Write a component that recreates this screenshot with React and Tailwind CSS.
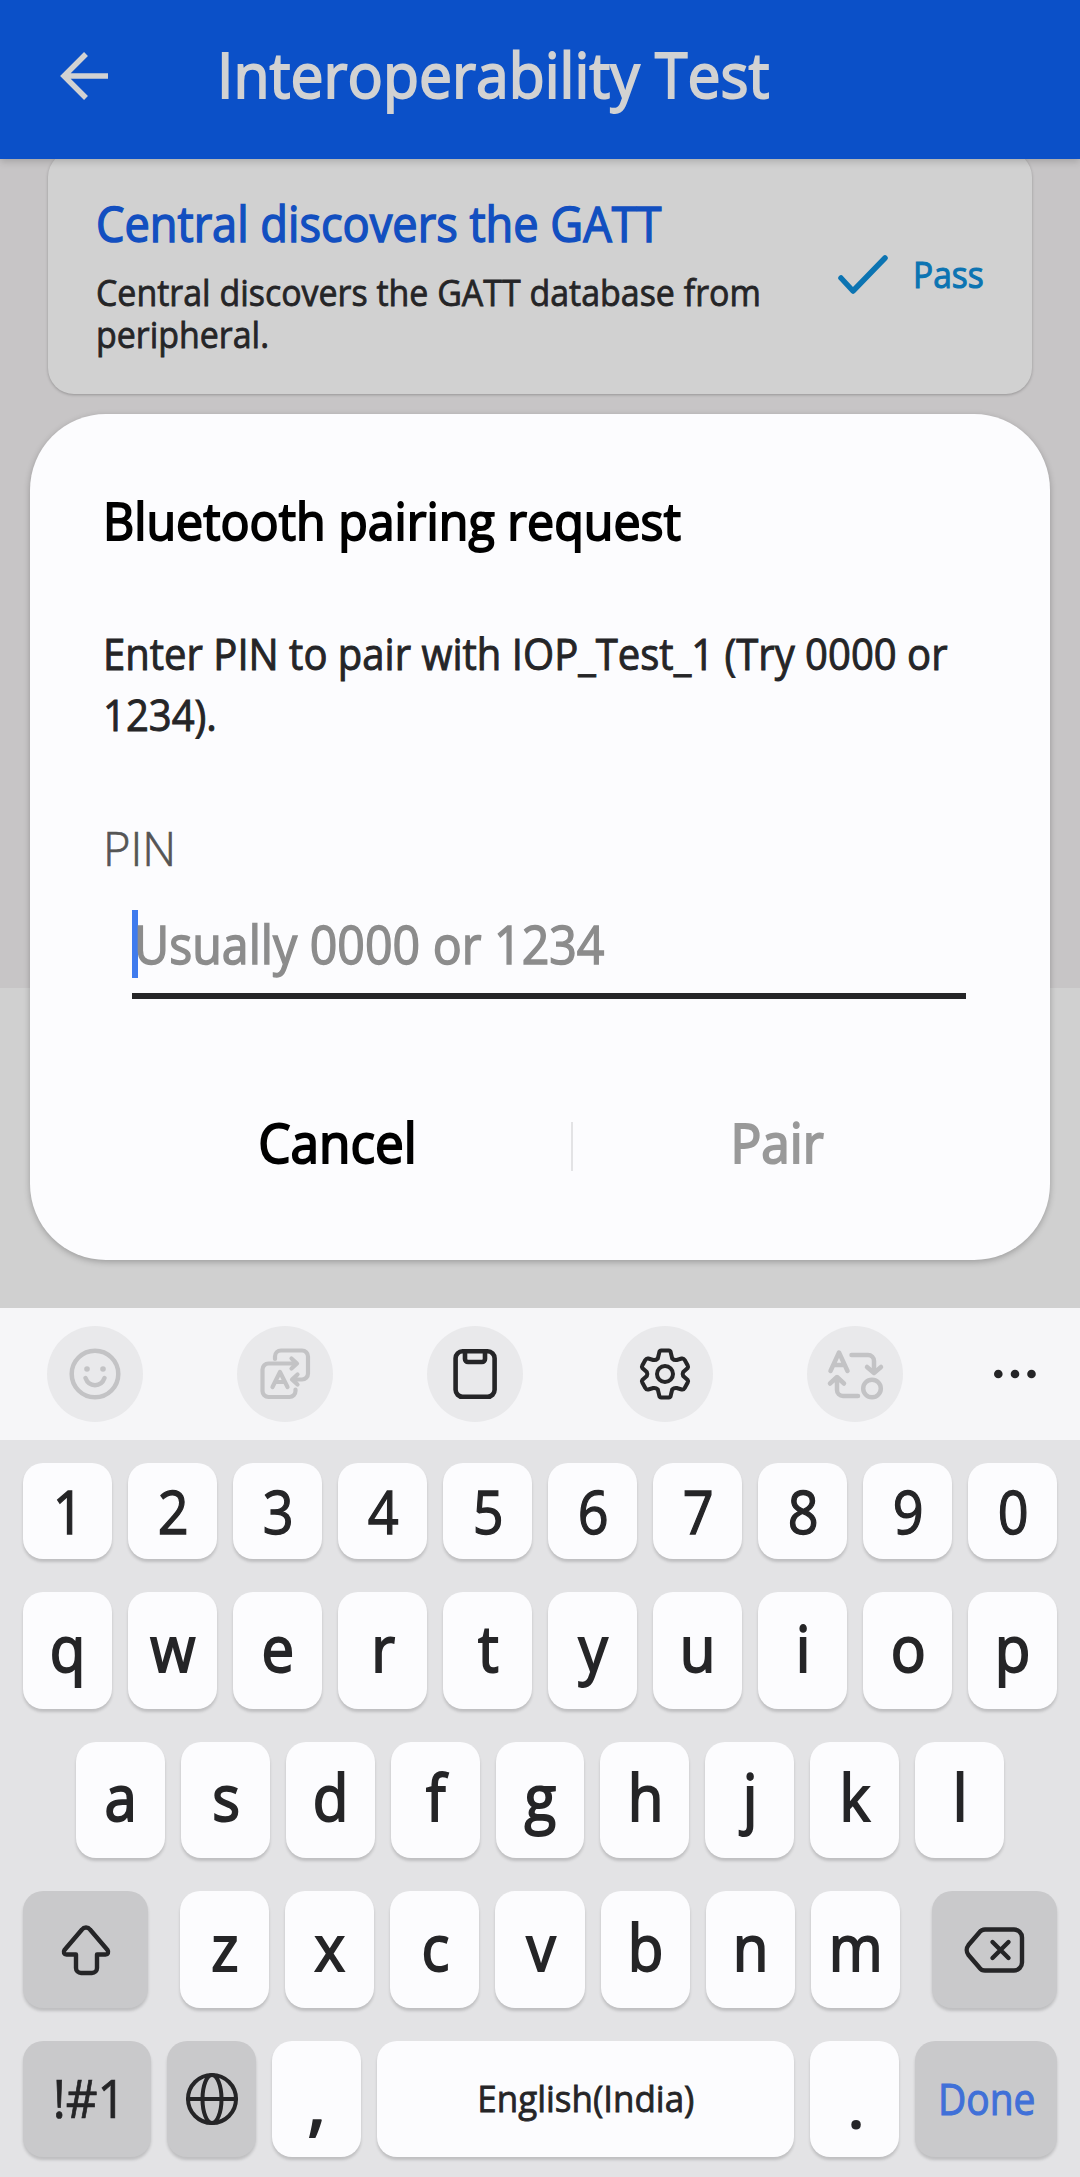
import React from "react";

const KEY = "flex items-center justify-center rounded-[20px] shadow-[0_3px_3px_rgba(0,0,0,0.16)]";

function Key({ children, className = "" }) {
  return <div className={`${KEY} bg-[#fcfcfe] ${className}`}>{children}</div>;
}

function FnKey({ children, className = "" }) {
  return <div className={`${KEY} bg-[#c9c9cb] ${className}`}>{children}</div>;
}

function Letter({ c, className = "h-[117px]" }) {
  return (
    <Key className={`text-[64px] [-webkit-text-stroke:0.030em] ${className}`}>
      <span className="-mt-[6px] ml-px inline-block leading-none scale-x-[0.91]">{c}</span>
    </Key>
  );
}

function Tool({ children }) {
  return <div className="mr-[94px] flex size-24 shrink-0 items-center justify-center rounded-full bg-[#e9e9eb]">{children}</div>;
}

const S = { fill: "none", stroke: "currentColor", strokeLinecap: "round", strokeLinejoin: "round" };

export default function App() {
  return (
    <div className="flex h-[2177px] w-[1080px] flex-col overflow-hidden bg-[#d0d0d0] font-['Open_Sans','Noto_Sans',sans-serif] font-normal text-[#252527]">
      <header className="z-10 flex h-[159px] shrink-0 items-center bg-[#0b50c8] pb-[8px] pl-[60px] text-[#d2d2d2] shadow-[0_2px_8px_rgba(0,0,0,0.2)]">
        <svg width="48" height="48" viewBox="0 0 48 48" {...S} strokeLinecap="butt" strokeLinejoin="miter" strokeWidth="5.5">
          <path d="M26 2 4 24l22 22M4 24h44" />
        </svg>
        <h1 className="ml-[109px] -mt-[3px] origin-left scale-x-[0.949] whitespace-nowrap text-[62px] leading-none [-webkit-text-stroke:0.030em]">Interoperability Test</h1>
      </header>

      <main className="h-[829px] shrink-0 bg-[#c7c5c6] px-12">
        <div className="-mt-[8px] flex h-[243px] rounded-[26px] bg-[#d1d1d1] pt-[8px] shadow-[0_1px_3px_rgba(0,0,0,0.25)]">
          <div className="w-[740px] pl-[48px] pt-[30px]">
            <h2 className="origin-left scale-x-[0.922] whitespace-nowrap text-[49px] leading-[68px] text-[#124fc0] [-webkit-text-stroke:0.030em]">Central discovers the GATT</h2>
            <p className="mt-[14px] origin-left scale-x-[0.917] whitespace-nowrap text-[37px] leading-[42px] [-webkit-text-stroke:0.022em]">
              Central discovers the GATT database from
              <br />
              peripheral.
            </p>
          </div>
          <div className="flex pt-[92px] text-[#0c74b2]">
            <svg className="mt-[3px] ml-[49px]" width="52" height="42" viewBox="0 0 52 42" {...S} strokeWidth="5.5">
              <path d="M4 24 16 37 48 4" />
            </svg>
            <span className="ml-[24px] origin-left scale-x-[0.93] text-[36px] leading-[48px] [-webkit-text-stroke:0.030em]">Pass</span>
          </div>
        </div>
      </main>

      <section className="z-20 mx-[30px] -mt-[574px] h-[846px] shrink-0 rounded-[76px] bg-[#fcfcfe] px-[73px] shadow-[0_2px_6px_rgba(0,0,0,0.25)]">
        <h2 className="origin-left scale-x-[0.93] whitespace-nowrap pt-[70px] text-[52px] leading-[72px] text-black [-webkit-text-stroke:0.036em]">Bluetooth pairing request</h2>
        <p className="mt-[67px] origin-left scale-x-[0.931] whitespace-nowrap text-[43px] leading-[61px] [-webkit-text-stroke:0.022em]">
          Enter PIN to pair with IOP_Test_1 (Try 0000 or
          <br />
          1234).
        </p>
        <p className="mt-[73px] origin-left text-[47px] font-light leading-[60px] text-[#555] [-webkit-text-stroke:0.015em]">PIN</p>
        <div className="ml-[29px] mt-[32px] flex h-[89px] w-[834px] items-start border-b-[6px] border-[#252527]">
          <div className="h-[68px] w-[6px] shrink-0 bg-[#3f7bee]" />
          <span className="-ml-[4px] origin-left scale-x-[0.911] whitespace-nowrap text-[53px] leading-[68px] text-[#8c8c8c] [-webkit-text-stroke:0.028em]">Usually 0000 or 1234</span>
        </div>
        <div className="mt-[105px] flex h-[84px] items-center text-[54px] [-webkit-text-stroke:0.036em]">
          <div className="flex w-[468px] shrink-0 justify-center pb-[7px] text-black">
            <span className="scale-x-[0.95]">Cancel</span>
          </div>
          <div className="h-[49px] w-[2px] shrink-0 bg-[#e3e3e5]" />
          <div className="flex w-[409px] shrink-0 justify-center pb-[7px] text-[#999]">
            <span className="scale-x-[0.95]">Pair</span>
          </div>
        </div>
      </section>

      <div className="mt-12 flex h-[132px] shrink-0 items-center bg-[#f6f6f8] pl-[47px] text-[#c3c3c5]">
        <Tool>
          <svg width="60" height="60" viewBox="0 0 60 60" {...S} strokeWidth="4.5">
            <circle cx="30" cy="30" r="23.3" />
            <path d="M20.5 34c3.5 9.5 15.5 9.5 19 0" />
            <circle cx="22" cy="25" r="2.8" fill="currentColor" stroke="none" />
            <circle cx="38" cy="25" r="2.8" fill="currentColor" stroke="none" />
          </svg>
        </Tool>
        <Tool>
          <svg width="60" height="60" viewBox="0 0 60 60" {...S} strokeWidth="4.2">
            <path d="M20 15v-2.500a6 6 0 0 1 6-6h21a6 6 0 0 1 6 6v17a6 6 0 0 1-6 6H38M42.500 30.500l-5.500 5 5.500 5" />
            <path d="M40.500 45.500v1.500a6 6 0 0 1-6 6H13.500a6 6 0 0 1-6-6V25.500a6 6 0 0 1 6-6h27M36.500 14.500l5.500 5-5.500 5" />
            <path d="M17.500 43l7.500-15 7.500 15M20.500 38h9" />
          </svg>
        </Tool>
        <Tool>
          <svg className="text-[#252527]" width="60" height="60" viewBox="0 0 60 60" {...S} strokeWidth="4.6">
            <rect x="10.6" y="7.3" width="39" height="45.5" rx="7" />
            <path d="M20 8v7a3 3 0 0 0 3 3h14a3 3 0 0 0 3-3V8" />
          </svg>
        </Tool>
        <Tool>
          <svg className="text-[#252527]" width="60" height="60" viewBox="0 0 60 60" {...S} strokeWidth="4">
            <path d="M24.500 7.500Q25 6.500 26 6.500h8q1 0 1.500 1l1.700 7q2 2 4.500 1.500l5-1.500q1.800-.5 3 1.500l3 5.500q.8 1.500 0 2.500l-4.500 4q-1 2 0 4l4.500 4q.8 1 0 2.500l-3 5.500q-1.200 2-3 1.500l-5-1.500q-2.500-.5-4.500 1.500l-1.700 7q-.5 1-1.500 1h-8q-1 0-1.500-1l-1.700-7q-2-2-4.500-1.500l-5 1.500q-1.800.5-3-1.500l-3-5.500q-.8-1.500 0-2.500l4.500-4q1-2 0-4l-4.500-4q-.8-1 0-2.500l3-5.500q1.200-2 3-1.500l5 1.500q2.500.5 4.500-1.500z" />
            <circle cx="30" cy="30" r="8" />
          </svg>
        </Tool>
        <Tool>
          <svg width="60" height="60" viewBox="0 0 60 60" {...S} strokeWidth="4.5">
            <path d="M5.500 27 14 8.500 22.500 27M9 21h10M26.500 11H43a6 6 0 0 1 6 6v11M42 23l7 6 7-6" />
            <path d="M33 52H18a6 6 0 0 1-6-6V34M5 39.500l7-6.500 7 6.500" />
            <circle cx="47" cy="44.5" r="8.8" />
          </svg>
        </Tool>
        <svg className="-ml-[4px] shrink-0 text-[#252527]" width="44" height="12" viewBox="0 0 44 12" fill="currentColor">
          <circle cx="5.3" cy="6" r="4.3" />
          <circle cx="22" cy="6" r="4.3" />
          <circle cx="38.5" cy="6" r="4.3" />
        </svg>
      </div>

      <div className="flex h-[737px] shrink-0 flex-col gap-[33px] bg-[#e3e3e5] px-[23px] pt-[23px]">
        <div className="grid grid-cols-10 gap-4">
          {[..."1234567890"].map((c) => (
            <Key key={c} className="h-24 text-[60px] [-webkit-text-stroke:0.022em]">
              <span className="-mt-px ml-[2px] inline-block scale-x-[0.9] leading-none">{c}</span>
            </Key>
          ))}
        </div>
        <div className="grid grid-cols-10 gap-4">
          {[..."qwertyuiop"].map((c) => (
            <Letter key={c} c={c} />
          ))}
        </div>
        <div className="grid grid-cols-9 gap-4 px-[53px]">
          {[..."asdfghjkl"].map((c) => (
            <Letter key={c} c={c} className="h-[116px]" />
          ))}
        </div>
        <div className="flex justify-between">
          <FnKey className="h-[117px] w-[125px]">
            <svg width="60" height="60" viewBox="0 0 60 60" {...S} strokeWidth="4.4">
              <path d="M26 9.500a5 5 0 0 1 8 0L51.500 30c1.500 2.500.5 4.500-2 4.500H41v13.500a5 5 0 0 1-5 5H25a5 5 0 0 1-5-5V34.500H10.500c-2.500 0-3.500-2-2-4.500z" />
            </svg>
          </FnKey>
          <div className="grid w-[720px] grid-cols-7 gap-4">
            {[..."zxcvbnm"].map((c) => (
              <Letter key={c} c={c} />
            ))}
          </div>
          <FnKey className="h-[117px] w-[125px]">
            <svg width="62" height="50" viewBox="0 0 62 50" {...S} strokeWidth="4.4">
              <path d="M21 4.500h29a8 8 0 0 1 8 8v25a8 8 0 0 1-8 8H21a7 7 0 0 1-5.500-2.700L4.500 30a8 8 0 0 1 0-10l11-12.800A7 7 0 0 1 21 4.500z" />
              <path d="M28.500 17l16 16M44.500 17l-16 16" />
            </svg>
          </FnKey>
        </div>
        <div className="flex gap-4">
          <FnKey className="h-[116px] w-[128px] text-[53px] [-webkit-text-stroke:0.014em]">
            <span className="-mt-[3px] ml-[4px] scale-x-[0.93]">!#1</span>
          </FnKey>
          <FnKey className="h-[116px] w-[89px]">
            <svg width="56" height="56" viewBox="0 0 56 56" {...S} strokeWidth="4">
              <circle cx="28" cy="28" r="24" />
              <ellipse cx="28" cy="28" rx="9.5" ry="24" />
              <path d="M4 28h48" />
            </svg>
          </FnKey>
          <Key className="h-[116px] w-[89px] text-[76px] font-semibold">
            <span className="leading-none">,</span>
          </Key>
          <Key className="h-[116px] w-[417px] text-[37px] [-webkit-text-stroke:0.022em]">
            <span className="-mt-[2px] scale-x-[0.945]">English(India)</span>
          </Key>
          <Key className="h-[116px] w-[89px] text-[66px] font-semibold">
            <span className="ml-[3px] mt-[7px] leading-none">.</span>
          </Key>
          <FnKey className="h-[116px] flex-1 text-[43px] text-[#4070d8] [-webkit-text-stroke:0.025em]">
            <span className="ml-[2px] scale-x-[0.905]">Done</span>
          </FnKey>
        </div>
      </div>
    </div>
  );
}
